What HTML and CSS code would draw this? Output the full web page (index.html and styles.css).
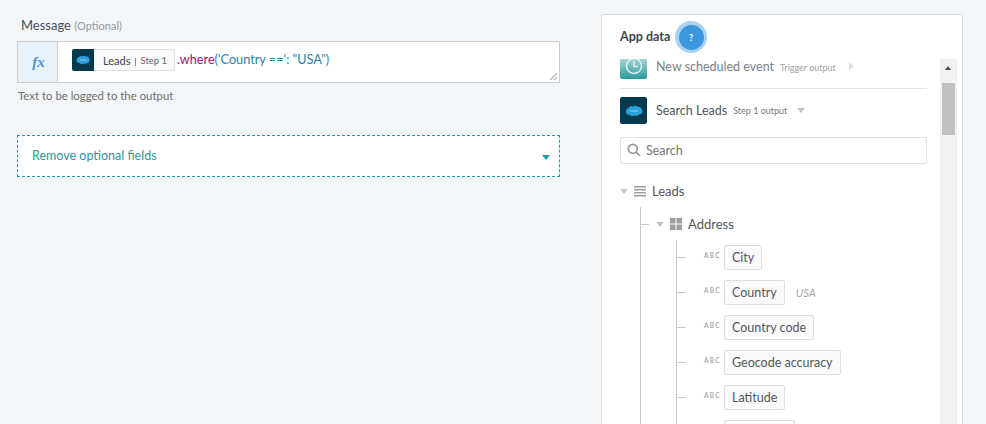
FILE: index.html
```html
<!DOCTYPE html>
<html lang="en">
<head>
  <meta charset="UTF-8">
  <title>Message step</title>
  <link rel="stylesheet" href="styles.css">
</head>
<body>
  <main class="form-col">
    <div class="field-label">Message <span class="optional">(Optional)</span></div>
    <div class="formula-box">
      <div class="fx">fx</div>
      <div class="formula-input">
        <span class="pill">
          <span class="pill-logo">
            <svg width="14" height="10" viewBox="0 0 16 11"><path d="M3.500 2.200C4.300 1 6 .6 7 1.500 7.800.5 9.800.3 10.800 1.400 12.500.9 15 2.200 15.400 4.500 16.300 6.500 14.800 9 12.500 8.800 11.500 10.300 9.500 10.400 8.500 9.500 7 10.800 4.700 10.400 4 9 2.200 9.300.4 7.800.6 5.800.7 4 2 2.600 3.500 2.200Z" fill="#2a9fd8"/><path d="M4 5.500h8" stroke="#9fd6ef" stroke-width="1"/></svg>
          </span>
          <span class="pill-name">Leads</span><span class="pill-step">Step 1</span>
        </span><span class="code"><span class="code-fn">.where</span><span class="code-str">('Country ==': "USA")</span></span>
        <svg class="grip" width="9" height="9" viewBox="0 0 9 9"><path d="M1 8 8 1M5 8 8 5" stroke="#b5b5b5" stroke-width="1.200"/></svg>
      </div>
    </div>
    <p class="hint">Text to be logged to the output</p>
    <div class="optional-toggle">
      <span>Remove optional fields</span>
      <span class="toggle-caret"></span>
    </div>
  </main>

  <aside class="panel">
    <h2 class="panel-title">App data</h2>
    <div class="help-dot"><span class="help-inner">?</span></div>
    <div class="panel-scroll">
      <div class="panel-list">
        <div class="source-row source-faded">
          <span class="source-icon clock">
            <svg width="18" height="18" viewBox="0 0 18 18" fill="none" stroke="#e4f4f4" stroke-width="1.500"><circle cx="9" cy="9" r="7.500"/><path d="M9 4v5.500h4"/></svg>
          </span>
          <span class="source-name">New scheduled event</span>
          <span class="source-sub">Trigger output</span>
          <span class="caret-right"></span>
        </div>
        <div class="source-row source-open">
          <span class="source-icon sf">
            <svg width="18" height="12" viewBox="0 0 16 11"><path d="M3.500 2.200C4.300 1 6 .6 7 1.500 7.800.5 9.800.3 10.800 1.400 12.500.9 15 2.200 15.400 4.500 16.300 6.500 14.800 9 12.500 8.800 11.500 10.300 9.500 10.400 8.500 9.500 7 10.800 4.700 10.400 4 9 2.200 9.300.4 7.800.6 5.800.7 4 2 2.600 3.500 2.200Z" fill="#2a9fd8"/><path d="M4 5.500h8" stroke="#9fd6ef" stroke-width=".8"/></svg>
          </span>
          <span class="source-name">Search Leads</span>
          <span class="source-sub">Step 1 output</span>
          <span class="caret-down caret-sub"></span>
        </div>
        <div class="search">
          <svg width="14" height="14" viewBox="0 0 14 14" fill="none" stroke="#9a9a9a" stroke-width="1.700"><circle cx="5.800" cy="5.800" r="4.500"/><path d="M9 9l4 4"/></svg>
          <span>Search</span>
        </div>

        <div class="tree-head tree-root">
          <span class="caret-down"></span>
          <svg class="tree-icon" width="12" height="11" viewBox="0 0 12 11" fill="#9e9e9e"><path d="M0 0h12v1.500H0zM0 3h12v1.500H0zM0 6h12v1.500H0zM0 9h12v1.500H0z"/></svg>
          <span>Leads</span>
        </div>
        <div class="branch branch-one">
          <div class="tree-head tree-address">
            <span class="tick"></span>
            <span class="caret-down"></span>
            <svg class="tree-icon" width="12" height="12" viewBox="0 0 12 12" fill="#9e9e9e"><path d="M0 0h5.500v5.500H0zM6.500 0H12v5.500H6.500zM0 6.500h5.500V12H0zM6.500 6.500H12V12H6.500z"/></svg>
            <span>Address</span>
          </div>
          <div class="branch branch-two">
            <div class="leaf"><span class="tick tick-leaf"></span><span class="abc">ABC</span><span class="tag">City</span></div>
            <div class="leaf"><span class="tick tick-leaf"></span><span class="abc">ABC</span><span class="tag">Country</span><span class="sample">USA</span></div>
            <div class="leaf"><span class="tick tick-leaf"></span><span class="abc">ABC</span><span class="tag">Country code</span></div>
            <div class="leaf"><span class="tick tick-leaf"></span><span class="abc">ABC</span><span class="tag">Geocode accuracy</span></div>
            <div class="leaf"><span class="tick tick-leaf"></span><span class="abc">ABC</span><span class="tag">Latitude</span></div>
            <div class="leaf"><span class="tick tick-leaf"></span><span class="abc">ABC</span><span class="tag">Longitude</span></div>
          </div>
        </div>
      </div>
      <div class="scrollbar">
        <span class="scroll-up"></span>
        <span class="scroll-thumb"></span>
      </div>
    </div>
  </aside>
</body>
</html>
```

FILE: styles.css
```css
* {
  margin: 0;
  padding: 0;
  box-sizing: border-box;
}

html, body {
  height: 424px;
  overflow: hidden;
}

body {
  position: relative;
  display: flex;
  align-items: flex-start;
  font-family: Lato, "Open Sans", sans-serif;
  font-size: 14px;
  color: #4a5260;
  background: #f3f6f9;
  padding: 14px 23px 0 17px;
}

/* Left column */
.form-col {
  width: 543px;
  margin-right: 41px;
}

.field-label {
  margin: 3px 0 0 4px;
  height: 24px;
  font-size: 13px;
  line-height: 16px;
  color: #494f57;
}

.optional {
  font-size: 11px;
  color: #999;
}

.formula-box {
  display: flex;
  height: 42px;
  border: 1px solid #ccc;
  background: #fff;
}

.fx {
  width: 40px;
  flex: none;
  padding: 1px 0 0 2px;
  background: #e7f2fb;
  border-right: 1px solid #ccc;
  font-family: "Liberation Serif", serif;
  font-style: italic;
  font-weight: 700;
  font-size: 15px;
  line-height: 38px;
  text-align: center;
  color: #4a97d6;
}

.formula-input {
  position: relative;
  flex: 1;
  display: flex;
  align-items: flex-start;
  padding: 7px 0 0 14px;
}

.pill {
  display: inline-flex;
  align-items: center;
  height: 22px;
  background: #fafafa;
  border: 1px solid #e2e2e2;
  border-left: 0;
  border-radius: 2px;
  font-size: 11px;
  color: #3f4652;
}

.pill-logo {
  display: flex;
  align-items: center;
  justify-content: center;
  width: 22px;
  height: 22px;
  background: #04394f;
  border-radius: 2px 0 0 2px;
}

.pill-name {
  margin-left: 9px;
}

.pill-step {
  margin-left: 5px;
  padding: 0 7px 0 5px;
  font-size: 9.500px;
  color: #666;
  background: linear-gradient(#888, #888) left 3px / 1px 9px no-repeat;
}

.code {
  margin-left: 2px;
  font-size: 12.700px;
  line-height: 20px;
}

.code-fn {
  color: #a5146e;
}

.code-str {
  color: #2f7fa8;
}

.grip {
  position: absolute;
  right: 1px;
  bottom: 1px;
}

.hint {
  margin: 5px 0 0 1px;
  font-size: 11.400px;
  line-height: 15px;
  color: #6f6f6f;
}

.optional-toggle {
  display: flex;
  align-items: center;
  justify-content: space-between;
  height: 42px;
  margin-top: 32px;
  padding: 0 9px 2px 14px;
  background: #fff;
  border: 1px dashed #1f9aa0;
  font-size: 12.500px;
  color: #2f979d;
}

.toggle-caret {
  width: 0;
  height: 0;
  margin-top: 4px;
  border: 4px solid transparent;
  border-top: 5px solid #1f9aa0;
  border-bottom: 0;
}

/* App data panel */
.panel {
  width: 362px;
  height: 420px;
  background: #fff;
  border: 1px solid #d9d9d9;
  border-radius: 2px;
}

.panel-title {
  margin: 14px 0 0 18px;
  height: 30px;
  font-size: 12.500px;
  font-weight: 700;
  line-height: 16px;
  color: #3d4450;
}

.help-dot {
  position: absolute;
  left: 675px;
  top: 21px;
  display: flex;
  align-items: center;
  justify-content: center;
  width: 32px;
  height: 32px;
  border-radius: 50%;
  background: #a9d2f0;
}

.help-inner {
  width: 25px;
  height: 25px;
  border-radius: 50%;
  background: #3c96dc;
  color: #fff;
  font-size: 9px;
  font-weight: 700;
  line-height: 25px;
  text-align: center;
}

.panel-scroll {
  display: flex;
  margin-left: 18px;
  height: 400px;
}

.panel-list {
  width: 307px;
  overflow: hidden;
}

.source-row {
  display: flex;
  align-items: center;
}

.source-faded {
  align-items: flex-start;
  height: 30px;
  border-bottom: 1px solid #e4e4e4;
  overflow: hidden;
}

.source-open {
  margin-top: 8px;
  height: 27px;
}

.source-icon {
  display: flex;
  align-items: center;
  justify-content: center;
  width: 27px;
  flex: none;
  border-radius: 2px;
}

.clock {
  height: 26px;
  margin-top: -6px;
  background: linear-gradient(#c6e6e6, #2a9a9e);
}

.sf {
  height: 27px;
  background: #04394f;
}

.source-name {
  margin-left: 9px;
  font-size: 12.500px;
  line-height: 15px;
  color: #4f5763;
}

.source-faded .source-name {
  color: #7c8289;
}

.source-sub {
  margin-left: 6px;
  font-size: 9px;
  line-height: 15px;
  color: #777;
}

.source-faded .source-sub {
  margin-top: 1px;
  color: #a0a0a0;
}

.caret-right {
  width: 0;
  height: 0;
  margin: 3px 0 0 13px;
  border: 4px solid transparent;
  border-left: 5px solid #dedede;
  border-right: 0;
}

.caret-down {
  flex: none;
  width: 0;
  height: 0;
  border: 4.500px solid transparent;
  border-top: 5px solid #c4c4c4;
  border-bottom: 0;
}

.caret-sub {
  margin-left: 10px;
}

.search {
  display: flex;
  align-items: center;
  gap: 5px;
  height: 27px;
  margin-top: 13px;
  padding: 0 0 1px 6px;
  border: 1px solid #e2e2e2;
  border-radius: 2px;
  font-size: 12.500px;
  color: #777;
}

.tree-head {
  display: flex;
  align-items: center;
  font-size: 13px;
  color: #4f5763;
}

.tree-root {
  height: 26px;
  margin-top: 14px;
}

.tree-icon {
  margin: 0 6px;
}

.branch {
  border-left: 1px solid #c9c9c9;
}

.branch-one {
  margin: 3px 0 0 20px;
  padding-top: 3px;
}

.tree-address {
  height: 29px;
  padding-bottom: 1px;
}

.tree-address .caret-down {
  margin-left: 7px;
}

.tick {
  flex: none;
  width: 8px;
  height: 1px;
  background: #c9c9c9;
}

.branch-two {
  margin-left: 35px;
  margin-top: 1px;
}

.leaf {
  display: flex;
  align-items: center;
  height: 35px;
}

.tick-leaf {
  width: 9px;
}

.abc {
  margin: -4px 0 0 18px;
  width: 20px;
  font-size: 6.500px;
  font-weight: 700;
  letter-spacing: 1.200px;
  color: #aaa;
}

.tag {
  padding: 0 7px;
  height: 25px;
  line-height: 23px;
  font-size: 12.500px;
  color: #4f5763;
  background: #fafafa;
  border: 1px solid #dedede;
  border-radius: 2px;
}

.sample {
  margin-left: 11px;
  font-size: 11px;
  font-style: italic;
  color: #a5a5a5;
}

.scrollbar {
  position: relative;
  width: 17px;
  margin-left: 13px;
  background: #f1f1f1;
}

.scroll-up {
  position: absolute;
  left: 5px;
  top: 7px;
  width: 0;
  height: 0;
  border: 3.500px solid transparent;
  border-bottom: 4px solid #505050;
  border-top: 0;
}

.scroll-thumb {
  position: absolute;
  left: 2px;
  top: 24px;
  width: 13px;
  height: 52px;
  background: #c1c1c1;
}
```
